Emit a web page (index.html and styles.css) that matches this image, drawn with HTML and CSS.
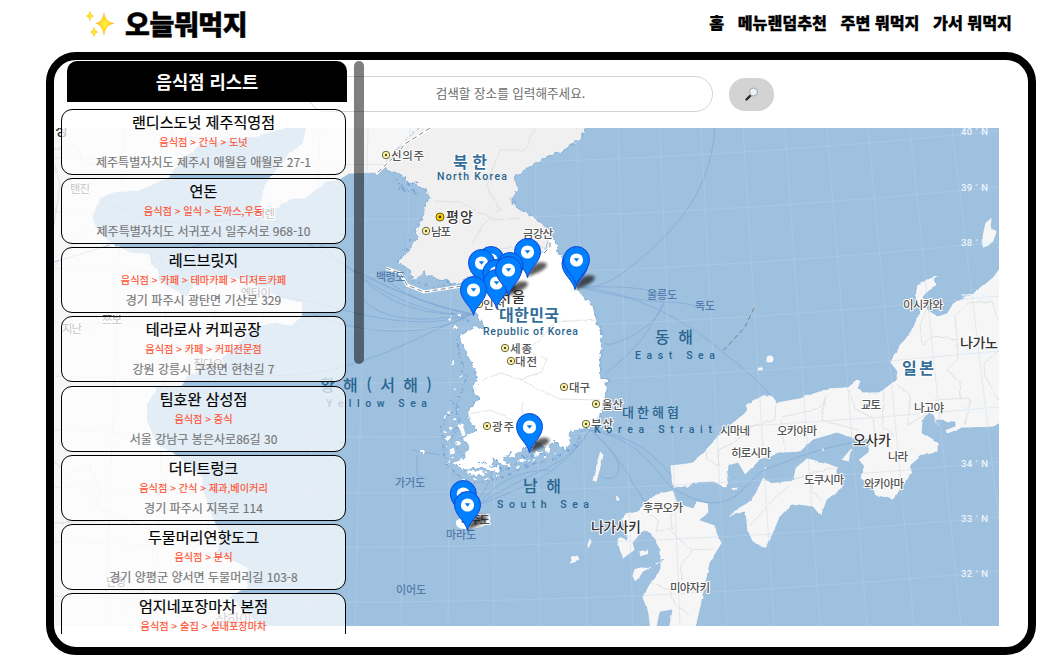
FILE: index.html
```html
<!DOCTYPE html>
<html lang="ko">
<head>
<meta charset="utf-8">
<title>오늘뭐먹지</title>
<link rel="stylesheet" href="styles.css">
</head>
<body>
<header class="topbar">
  <a class="brand">
    <svg class="sparkles" viewBox="0 0 30 30">
      <defs><radialGradient id="gold"><stop offset="0" stop-color="#fff34a"/><stop offset=".5" stop-color="#ffd51e"/><stop offset="1" stop-color="#f5a13c"/></radialGradient></defs>
      <g fill="url(#gold)">
        <path d="M19 3Q20 13 29.500 14.500Q20 16 19 27Q17.500 16 10.500 14.500Q17.500 13 19 3Z"/>
        <path d="M5 1Q5.500 6 9 7Q5.500 8 5 13Q4 8 1 7Q4 6 5 1Z"/>
        <path d="M9 17Q9.500 22 13.500 23Q9.500 24 9 29Q8.500 24 5 23Q8.500 22 9 17Z"/>
      </g>
    </svg>
    <span>오늘뭐먹지</span>
  </a>
  <nav class="menu"><a>홈</a><a>메뉴랜덤추천</a><a>주변 뭐먹지</a><a>가서 뭐먹지</a></nav>
</header>
<main class="frame">
  <div class="search">
    <input class="search-input" type="text" placeholder="검색할 장소를 입력해주세요.">
    <button class="search-button" aria-label="검색">
      <svg class="lens" viewBox="0 0 14 14"><path d="M1.500 12.500L5.500 8.500" stroke="#222" stroke-width="2.300" stroke-linecap="round"/><circle cx="8.500" cy="5" r="4" fill="#edf0f3" stroke="#9fa8b1"/><path d="M6.500 4.500Q7 3 8.500 2.700" fill="none" stroke="#fff"/></svg>
    </button>
  </div>
  <svg class="map" viewBox="54 128 945 498">
    <defs>
      <filter id="rough" x="-5%" y="-5%" width="110%" height="110%"><feTurbulence type="fractalNoise" baseFrequency=".16" numOctaves="3" seed="4"/><feDisplacementMap in="SourceGraphic" scale="7" xChannelSelector="R" yChannelSelector="G"/></filter>
      <filter id="coast" x="-5%" y="-5%" width="110%" height="110%"><feTurbulence type="fractalNoise" baseFrequency=".12" numOctaves="2" seed="9"/><feDisplacementMap in="SourceGraphic" scale="3" xChannelSelector="R" yChannelSelector="G"/></filter>
      <filter id="soft" x="-30%" y="-30%" width="160%" height="160%"><feGaussianBlur stdDeviation="1.700"/></filter>
      <g id="town"><circle r="3.700" fill="#fff4a0" stroke="#65644c" stroke-width="1"/><circle r="1.200" fill="#4f4d37"/></g>
      <path id="shade" d="M0 0Q3-11 10-14Q17-16 20-13Q20-9 12-5Z" fill="#111" opacity=".68" filter="url(#soft)"/>
      <g id="pin">
        <path d="M0 0C-1.500-9-13-15-13-26A13 13 0 0 1 13-26C13-15 1.500-9 0 0Z" fill="#0080ff" stroke="#1245d4" stroke-width="1"/>
        <circle cy="-25.500" r="6.600" fill="#fff"/><path d="M-2.800-27.200H2.800L0-23.700Z" fill="#0878e8"/>
      </g>
    </defs>
    <rect x="54" y="128" width="945" height="498" fill="#9fc1e0"/>

    <g filter="url(#coast)" stroke="#8bb3da" stroke-width=".6">
      <path fill="#f6f6f6" d="M48 122H286L284 129L270 133L253 137L222 142L200 145L187 157L168 178L139 191L112 193L100 199L93 217L98 230L112 243L130 252L150 255L152 263L160 273L158 280L172 288L187 296L193 283L213 275L232 277L247 280L263 288L280 297L303 303L302 317L290 327L276 323L253 328L240 343L220 360L200 370L187 377L182 387L157 388L149 402L147 420L157 443L183 460L203 477L203 490L213 517L222 537L217 553L247 567L248 587L230 597L242 607L257 623V632H48Z"/>
      <path fill="#f6f6f6" d="M307 122L302 144L293 150L278 167L263 187L260 205L268 214L280 206L292 199L305 199L326 182L338 181L349 174L376 173L404 157L425 122Z"/>
      <path fill="#f6f6f6" d="M1005 260L993 277L980 288L970 295L953 303L947 313L938 316L928 310L923 297L929 290L937 285L934 280L940 275L930 278L917 285L915 297L920 310L913 327L897 350L890 362L897 373L895 380L880 392L862 392L858 388L861 381L857 379L847 387L828 388L800 398L777 402L772 395L763 395L745 405L747 411L727 427L707 448L693 462L680 464L670 465L672 487L688 488L693 483L713 482L727 488L729 465L738 463L745 475L760 460L782 453L800 452L813 440L837 433L852 438L870 440L868 452L858 460L863 467L860 478L872 487L875 495L893 500L900 490L912 472L911 465L923 455L938 453L938 443L922 433L923 420L928 413L933 415L937 425L940 427L937 421L955 422L955 426L945 430L947 434L963 428L995 427L1005 419Z"/>
      <path fill="#f6f6f6" d="M763 477L770 483L793 480L795 468L807 458L824 462L838 467L838 477L843 487L827 500L821 517L813 507L792 504L780 517L767 548L753 543L747 530L745 512L728 517L738 508L752 500Z"/>
      <path fill="#f6f6f6" d="M653 495L673 490L678 503L693 508L697 501L708 503L709 512L700 520L715 525L717 533L722 543L710 563L700 610L695 632H668L672 610L660 612L656 632H650L648 613L642 597L650 583L660 570L660 550L650 533L642 532L633 543L635 550L623 559L617 543L618 536L627 540L622 520L625 513L638 510Z"/>
      <path fill="#f6f6f6" d="M992 217L991 228L997 232L993 243L983 249L982 237L985 223ZM852 447L849 462L841 460ZM600 451L604 455L600 470L597 482L592 481L595 467ZM571 556L578 554L580 561L569 564ZM590 536L592 542L588 550L587 545ZM639 551L648 549L648 554L640 557ZM634 569L641 567L653 568L643 573L635 582L632 576ZM616 497L619 495L620 501L616 501ZM730 488L740 487L734 491ZM765 466L767 468L764 471ZM820 450L824 447L825 452ZM664 560L655 563L656 565Z"/>
      <ellipse cx="770" cy="359" rx="4" ry="4" fill="#f6f6f6"/><ellipse cx="760" cy="369" rx="3" ry="2" fill="#f6f6f6"/>
    </g>

    <g fill="none" stroke="#7ba5d4" stroke-width=".8" opacity=".8">
      <path d="M715 128C710 195 673 235 620 275Q595 291 579 287M579 287Q650 285 662 296M579 287Q630 300 664 302Q690 302 696 308M579 287C640 292 700 330 722 352Q750 372 772 397M664 302C660 325 612 350 604 343M664 302Q645 345 605 374"/>
      <path d="M472 314C430 306 350 280 268 214M472 314C420 319 340 278 280 200M472 314C400 338 330 300 280 297M472 314C420 334 350 382 260 375M472 314C420 345 330 328 303 308M472 314Q390 329 364 300M472 314Q410 301 364 274M472 314Q405 318 364 280M472 314Q420 307 381 277M268 214C200 225 160 230 108 203M268 214C210 250 160 250 150 265M110 245L54 262"/>
      <path d="M590 430C625 460 629 480 645 502M590 430C640 440 650 465 672 488M590 430C635 436 655 455 672 477M590 430C640 470 612 485 601 476M673 488C740 530 745 470 773 467Q820 446 865 441M478 505Q505 470 550 470M478 505C530 485 560 475 590 430M478 505C540 465 565 470 590 430M468 514C495 478 495 470 488 460M412 450L440 455M417 455V475L427 479"/>
    </g>
    <g fill="none" stroke="#c1d3e5" stroke-width=".7" opacity=".55">
      <path d="M54 158Q520 180 999 131M54 212Q520 235 999 187M54 268Q520 291 999 242M54 322Q520 345 999 296M54 376Q520 399 999 351M54 430Q520 452 999 407M54 487Q520 507 999 462M54 542Q520 560 999 517M54 596Q520 616 999 571"/>
      <path d="M124 128L105 626M172 128L155 626M220 128L205 626M268 128L255 626M320 128L307 626M368 128L355 626M410 128L401 626M452 128L448 626M495 128L494 626M535 128L540 626M577 128L587 626M618 128L633 626M660 128L680 626M701 128L727 626M743 128L774 626M785 128L820 626M827 128L867 626M868 128L914 626M910 128L961 626M952 128L999 520"/>
    </g>

    <g filter="url(#rough)">
      <path fill="#f0f0f0" stroke="#75a5d4" stroke-width=".7" d="M377 173L383 169L400 173L407 182L423 188L430 198L425 207L422 220L415 230L418 237L407 253L397 263L410 270L413 282L423 273L440 280L460 283L470 276L470 290L540 270L556 250L550 230L527 213L512 205L512 197L518 190L515 177L530 167L545 157L560 152L580 140L587 128V120H425L404 143Z"/>
      <path fill="#fff" stroke="#75a5d4" stroke-width=".8" d="M476 315L482 322L485 330L475 325L468 330L458 337L463 347L468 358L475 370L477 382L471 390L480 398L468 410L468 420L477 430L462 438L469 447L465 458L458 466L464 471L480 467L491 471L494 458L500 464L510 452L514 458L524 447L530 452L536 441L548 450L554 440L566 452L571 431L590 428L598 420L605 398L608 377L601 380L600 360L602 337L593 307L577 290L560 253L550 231L546 250L520 261L490 270L473 287Z"/>
      <path fill="none" stroke="#fff" stroke-width="4" stroke-linecap="round" d="M449 413H450M454 420H455M450 428H451M460 425L463 433M447 438H449M457 444H459M451 451H452M456 464L462 461M470 473H483M491 469H498M502 463H504M512 455H513M520 460H522M536 454H540M548 444V450M560 440L568 444M564 427L572 430M466 346L468 354"/>
      <path fill="none" stroke="#fff" stroke-width="2" stroke-linecap="round" d="M452 363H453M460 377H461M454 389H455M445 418H446M443 432H444M446 446H447M453 457H454M448 462H449M464 481H465M475 479H477M486 478H488M497 475H498M508 465H510M517 467H518M527 461H528M533 460H534M545 456H546M554 453H555M459 398H460M456 409H457M450 319H451M458 316H459M455 326H456M422 452H424"/>
      <path fill="none" stroke="#79a6d5" stroke-width="1.800" stroke-dasharray="1 3 3 2" d="M457 340L466 380L457 406L442 425L444 455L455 475L475 484L500 478L530 465L555 458L576 446L582 430M450 400L461 418L452 440L463 456M478 462L505 470L522 457L548 454M395 180L406 190L418 193M403 185L420 183M398 188L415 190M445 281L464 289L478 317M420 284L445 288M448 312L470 322M514 198L516 209M404 240L412 238M402 250L409 248"/>
    </g>
    <path d="M456 521Q466 513 483 514Q493 515 490 521Q483 529 467 529Q455 530 456 521Z" fill="#fff"/>
    <g fill="none" stroke="#dcdcdc" stroke-width=".8" filter="url(#coast)">
      <path d="M535 128L525 150L500 150L486 185L500 210L483 225L472 244M434 201L461 202L494 220L520 218M486 250L524 247L552 248M482 380L500 373L520 379L542 372L547 359L526 350L540 340L555 322L596 319M520 379L532 386L560 399L600 400M523 402L520 431M470 414L490 410L514 421"/>
      <path d="M54 150L76 145L84 164L104 165L125 150M54 225L60 185L55 165M54 460L66 475L90 465L100 490L95 505L150 530L155 580L120 610M54 523L120 520M85 230L55 266M120 315L70 335"/>
      <path d="M776 402L775 420L755 425L735 442L718 450L719 466L707 460L706 450M780 420L785 450M782 417L820 408L830 392M825 396L822 420L858 430M849 390L855 409L873 418L875 435M884 392L882 425L895 436M897 384L910 395L908 425L925 415M926 310L920 325L922 345L933 336L957 340M957 340L955 315L968 303L992 301L998 320M957 340L958 358L947 370L960 382L961 400M934 400L970 398L965 425M999 350L984 363L985 377L999 400M650 515L659 520L656 531L670 530L680 540L692 550L713 549M672 530L671 515L678 504M692 550L681 565L682 580M650 583L670 590L675 604L690 615M750 525L760 515L770 502L790 485M789 482L808 474L835 468M812 476L812 490L822 502"/>
    </g>
    <path d="M430 128L405 144L397 154L376 174M386 268L400 273L407 285L424 292L462 286M544 253L550 247V239" fill="none" stroke="#fff" stroke-width="3"/>
    <path d="M430 128L405 144L397 154L376 174M386 268L400 273L407 285L424 292L462 286M544 253L550 247V239M754 308L745 327L722 352" fill="none" stroke="#777" stroke-width=".9" stroke-dasharray="5 3"/>

    <g class="place">
      <text x="391" y="160" textLength="33">신의주</text><text x="431" y="236" textLength="20">남포</text><text x="523" y="238" textLength="30">금강산</text><text x="483" y="309" textLength="22">인천</text>
      <text x="510" y="353" textLength="22">세종</text><text x="515" y="366" textLength="22">대전</text><text x="569" y="392" textLength="21">대구</text><text x="602" y="409" textLength="21">울산</text><text x="591" y="428" textLength="22">부산</text><text x="492" y="431" textLength="22">광주</text><text x="461" y="524" textLength="29">제주도</text>
      <text x="903" y="309" textLength="40">이시카와</text><text x="720" y="435" textLength="30">시마네</text><text x="777" y="435" textLength="40">오카야마</text><text x="731" y="457" textLength="40">히로시마</text><text x="861" y="409" textLength="20">교토</text><text x="914" y="412" textLength="30">나고야</text><text x="888" y="461" textLength="20">나라</text><text x="864" y="488" textLength="40">와카야마</text><text x="804" y="484" textLength="40">도쿠시마</text><text x="643" y="512" textLength="40">후쿠오카</text><text x="670" y="592" textLength="40">미야자키</text>
      <text x="70" y="193" textLength="20">톈진</text><text x="255" y="218" textLength="20">다롄</text><text x="241" y="297" textLength="30">옌타이</text><text x="102" y="324" textLength="20">쯔보</text><text x="62" y="333" textLength="20">지난</text><text x="193" y="368" textLength="30">칭다오</text><text x="106" y="586" textLength="20">난징</text>
    </g>
    <g class="place city">
      <text x="446" y="222" textLength="27">평양</text><text x="498" y="302" textLength="27">서울</text><text x="853" y="445" textLength="38">오사카</text><text x="591" y="532" textLength="50">나가사키</text><text x="960" y="348" textLength="38">나가노</text><text class="muted" x="215" y="624" textLength="37">상하이</text><text x="30" y="135" textLength="38">베이징</text>
    </g>
    <g class="isle"><text x="376" y="281" textLength="29">백령도</text><text x="395" y="487" textLength="30">가거도</text><text x="446" y="539" textLength="30">마라도</text><text x="396" y="594" textLength="30">이어도</text><text x="647" y="299" textLength="30">울릉도</text><text x="695" y="310" textLength="20">독도</text></g>
    <g class="country"><text x="453" y="168" textLength="34">북 한</text><text x="499" y="321" textLength="60">대한민국</text><text x="902" y="374" textLength="32">일 본</text></g>
    <g class="english"><text x="437" y="180" textLength="70">North Korea</text><text x="483" y="335" textLength="95">Republic of Korea</text></g>
    <g class="sea"><text x="655" y="343" textLength="38">동 해</text><text x="320" y="391" textLength="112">황 해 ( 서 해 )</text><text x="523" y="492" textLength="38">남 해</text><text class="strait" x="622" y="417" textLength="57">대한해협</text></g>
    <g class="english"><text x="635" y="359" textLength="80">East Sea</text><text x="326" y="407" textLength="101">Yellow Sea</text><text x="497" y="508" textLength="92">South Sea</text><text x="594" y="433" textLength="118">Korea Strait</text></g>
    <g class="latitude"><text x="961" y="135" textLength="27">40 ˚ N</text><text x="961" y="191" textLength="27">39 ˚ N</text><text x="961" y="246" textLength="27">38 ˚ N</text><text x="961" y="301" textLength="27">37 ˚ N</text><text x="961" y="356" textLength="27">36 ˚ N</text><text x="961" y="412" textLength="27">35 ˚ N</text><text x="961" y="467" textLength="27">34 ˚ N</text><text x="961" y="522" textLength="27">33 ˚ N</text><text x="961" y="577" textLength="27">32 ˚ N</text></g>
    <g><use href="#town" x="386" y="155"/><use href="#town" x="426" y="231"/><use href="#town" x="505" y="348"/><use href="#town" x="511" y="361"/><use href="#town" x="564" y="387"/><use href="#town" x="596" y="404"/><use href="#town" x="586" y="424"/><use href="#town" x="487" y="426"/><use href="#town" x="479" y="304"/><circle cx="440" cy="217" r="4" fill="#ffd20d" stroke="#735f00"/><circle cx="440" cy="217" r="1.400" fill="#4b3c00"/></g>

    <g><use href="#shade" x="491" y="285"/><use href="#shade" x="496" y="299"/><use href="#shade" x="508" y="296"/><use href="#shade" x="527" y="277"/><use href="#shade" x="575" y="290"/><use href="#shade" x="529.500" y="452.500"/><use href="#shade" x="467.500" y="530"/></g>
    <g><use href="#pin" x="491" y="285.500"/><use href="#pin" x="481.500" y="288.500"/><use href="#pin" x="527.500" y="277.500"/><use href="#pin" x="510" y="291.500"/><use href="#pin" x="496" y="298.500"/><use href="#pin" x="496.500" y="308.500"/><use href="#pin" x="508.500" y="295.500"/><use href="#pin" x="473.500" y="315.500"/><use href="#pin" x="575" y="289.500"/><use href="#pin" x="576.500" y="285.500"/><use href="#pin" x="529.500" y="452.500"/><use href="#pin" x="463.300" y="519.500"/><use href="#pin" x="467.500" y="530.500"/></g>
  </svg>

  <aside class="panel">
    <h2 class="panel-title">음식점 리스트</h2>
    <ul class="cards">
      <li class="card"><b class="name">랜디스도넛 제주직영점</b><span class="kind">음식점 &gt; 간식 &gt; 도넛</span><span class="address">제주특별자치도 제주시 애월읍 애월로 27-1</span></li>
      <li class="card"><b class="name">연돈</b><span class="kind">음식점 &gt; 일식 &gt; 돈까스,우동</span><span class="address">제주특별자치도 서귀포시 일주서로 968-10</span></li>
      <li class="card"><b class="name">레드브릿지</b><span class="kind">음식점 &gt; 카페 &gt; 테마카페 &gt; 디저트카페</span><span class="address">경기 파주시 광탄면 기산로 329</span></li>
      <li class="card"><b class="name">테라로사 커피공장</b><span class="kind">음식점 &gt; 카페 &gt; 커피전문점</span><span class="address">강원 강릉시 구정면 현천길 7</span></li>
      <li class="card"><b class="name">팀호완 삼성점</b><span class="kind">음식점 &gt; 중식</span><span class="address">서울 강남구 봉은사로86길 30</span></li>
      <li class="card"><b class="name">더티트렁크</b><span class="kind">음식점 &gt; 간식 &gt; 제과,베이커리</span><span class="address">경기 파주시 지목로 114</span></li>
      <li class="card"><b class="name">두물머리연핫도그</b><span class="kind">음식점 &gt; 분식</span><span class="address">경기 양평군 양서면 두물머리길 103-8</span></li>
      <li class="card"><b class="name">엄지네포장마차 본점</b><span class="kind">음식점 &gt; 술집 &gt; 실내포장마차</span></li>
    </ul>
    <div class="thumb"></div>
  </aside>
</main>
</body>
</html>
```
FILE: styles.css
```css
* { box-sizing: border-box; }
body {
  margin: 0;
  height: 664px;
  overflow: hidden;
  background: #fff;
  color: #000;
  font-family: "Noto Sans CJK KR", sans-serif;
}
.topbar {
  display: flex;
  justify-content: space-between;
  align-items: center;
  height: 52px;
  padding: 0 52px 4px 85px;
}
.brand {
  display: flex;
  align-items: center;
  gap: 10px;
  font-size: 27px;
  font-weight: 900;
  letter-spacing: -.4px;
  line-height: 1;
  -webkit-text-stroke: .5px #000;
}
.sparkles { width: 30px; height: 30px; }
.menu {
  display: flex;
  gap: 13.5px;
  padding-bottom: 4px;
  font-size: 16.2px;
  font-weight: 900;
  line-height: 1;
  -webkit-text-stroke: .3px #000;
}
.brand span { padding-bottom: 2px; }
.frame {
  position: relative;
  width: 990px;
  height: 603px;
  margin-left: 46px;
  border: 8px solid #000;
  border-radius: 30px;
  overflow: hidden;
}
.search {
  display: flex;
  justify-content: center;
  align-items: center;
  gap: 16px;
  padding: 16px 0;
}
.search-input {
  width: 405px;
  height: 36px;
  padding: 0 2px 3px;
  border: 1px solid #d3d3d3;
  border-radius: 18px;
  background: #fff;
  text-align: center;
  font-family: inherit;
  font-size: 12.6px;
}
.search-input::placeholder { color: #6c6c6c; }
.search-button {
  display: flex;
  justify-content: center;
  align-items: center;
  width: 45px;
  height: 33px;
  padding: 0;
  border: 0;
  border-radius: 16px;
  background: #d3d3d3;
}
.lens { width: 14px; height: 14px; }
.map { display: block; width: 945px; height: 498px; }
.place {
  fill: #555;
  font-size: 11.5px;
  font-weight: 500;
  stroke: #fff;
  stroke-width: 2px;
  stroke-linejoin: round;
  paint-order: stroke;
}
.city { fill: #333; font-size: 14px; font-weight: 500; }
.muted { fill: #888; }
.isle { fill: #527ba9; font-size: 11px; font-weight: 500; }
.country {
  fill: #326e98;
  font-size: 16px;
  font-weight: 700;
  stroke: #fff;
  stroke-width: 2px;
  paint-order: stroke;
}
.sea { fill: #28658f; font-size: 16px; font-weight: 500; }
.strait { font-size: 13px; }
.english { fill: #28658f; font-family: Roboto, sans-serif; font-size: 10.5px; font-weight: 500; }
.latitude { fill: #edf5fb; font-family: Roboto, sans-serif; font-size: 9.5px; font-weight: 500; }
.panel {
  position: absolute;
  top: 1px;
  left: 7px;
  width: 304px;
  height: 573px;
  overflow: hidden;
}
.panel-title {
  width: 280px;
  height: 41px;
  margin: 0 0 7px 6px;
  border-radius: 10px 10px 0 0;
  background: #000;
  color: #fff;
  text-align: center;
  font-size: 17.7px;
  font-weight: 700;
  line-height: 40px;
}
.cards {
  display: flex;
  flex-direction: column;
  gap: 3.15px;
  width: 285px;
  margin: 0;
  padding: 0;
  list-style: none;
}
.card {
  display: flex;
  flex-direction: column;
  flex: none;
  height: 66px;
  border: 1px solid #000;
  border-radius: 11px;
  background: rgba(255, 255, 255, .7);
  text-align: center;
  white-space: nowrap;
}
.name { margin-top: -1px; font-size: 15.1px; font-weight: 400; line-height: 24px; -webkit-text-stroke: .2px #000; }
.kind { margin-top: 1px; color: #ff5131; font-size: 10.2px; line-height: 16px; -webkit-text-stroke: .15px #ff5131; }
.address { color: #767676; font-size: 12.05px; line-height: 24px; -webkit-text-stroke: .15px #767676; }
.thumb {
  position: absolute;
  top: 0;
  right: 1px;
  width: 10px;
  height: 303px;
  border-radius: 5px;
  background: rgba(0, 0, 0, .5);
}
```
